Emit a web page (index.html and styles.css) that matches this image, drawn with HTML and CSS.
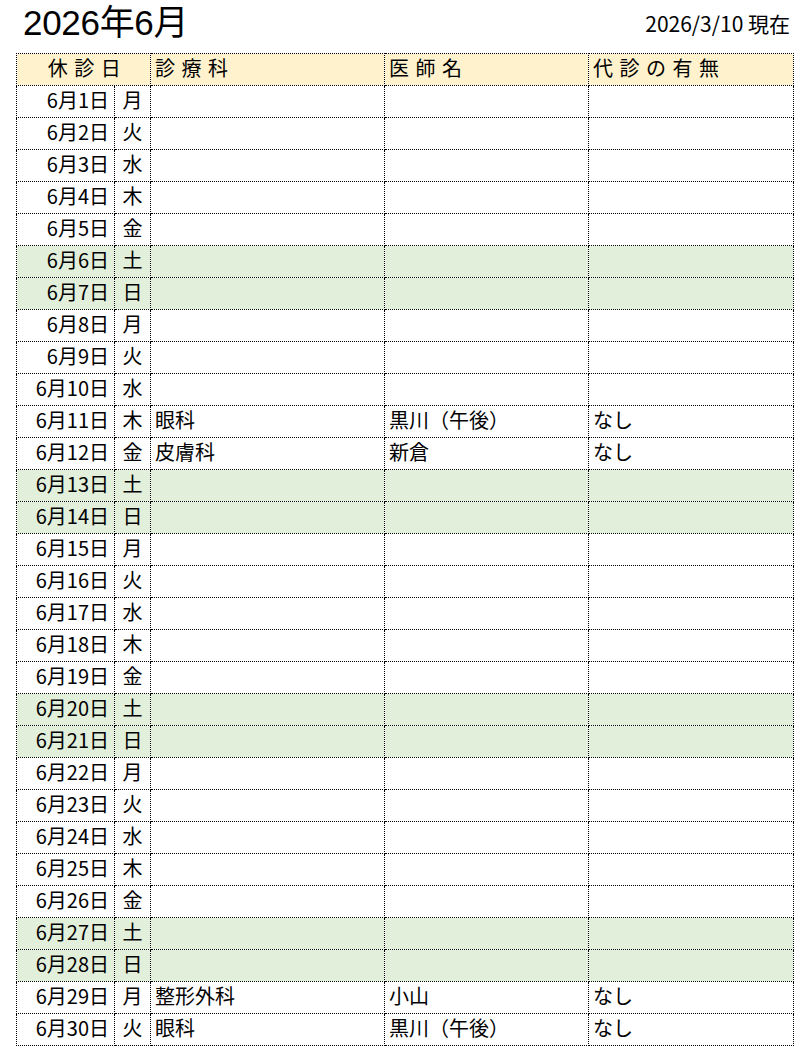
FILE: index.html
```html
<!DOCTYPE html>
<html lang="ja">
<head>
<meta charset="utf-8">
<link rel="stylesheet" href="styles.css">
</head>
<body>
<div class="page">
  <div class="top">
    <h1 class="title">2026年6月</h1>
    <div class="asof">2026/3/10 現在</div>
  </div>
  <table class="sched">
    <colgroup>
      <col class="c-date"><col class="c-wd"><col class="c-dept"><col class="c-doc"><col class="c-sub">
    </colgroup>
    <thead>
      <tr><th colspan="2" class="h-center">休診日</th><th>診療科</th><th>医師名</th><th>代診の有無</th></tr>
    </thead>
    <tbody>
      <tr><td class="d">6月1日</td><td class="w">月</td><td></td><td></td><td></td></tr>
      <tr><td class="d">6月2日</td><td class="w">火</td><td></td><td></td><td></td></tr>
      <tr><td class="d">6月3日</td><td class="w">水</td><td></td><td></td><td></td></tr>
      <tr><td class="d">6月4日</td><td class="w">木</td><td></td><td></td><td></td></tr>
      <tr><td class="d">6月5日</td><td class="w">金</td><td></td><td></td><td></td></tr>
      <tr class="we"><td class="d">6月6日</td><td class="w">土</td><td></td><td></td><td></td></tr>
      <tr class="we"><td class="d">6月7日</td><td class="w">日</td><td></td><td></td><td></td></tr>
      <tr><td class="d">6月8日</td><td class="w">月</td><td></td><td></td><td></td></tr>
      <tr><td class="d">6月9日</td><td class="w">火</td><td></td><td></td><td></td></tr>
      <tr><td class="d">6月10日</td><td class="w">水</td><td></td><td></td><td></td></tr>
      <tr><td class="d">6月11日</td><td class="w">木</td><td>眼科</td><td>黒川（午後）</td><td>なし</td></tr>
      <tr><td class="d">6月12日</td><td class="w">金</td><td>皮膚科</td><td>新倉</td><td>なし</td></tr>
      <tr class="we"><td class="d">6月13日</td><td class="w">土</td><td></td><td></td><td></td></tr>
      <tr class="we"><td class="d">6月14日</td><td class="w">日</td><td></td><td></td><td></td></tr>
      <tr><td class="d">6月15日</td><td class="w">月</td><td></td><td></td><td></td></tr>
      <tr><td class="d">6月16日</td><td class="w">火</td><td></td><td></td><td></td></tr>
      <tr><td class="d">6月17日</td><td class="w">水</td><td></td><td></td><td></td></tr>
      <tr><td class="d">6月18日</td><td class="w">木</td><td></td><td></td><td></td></tr>
      <tr><td class="d">6月19日</td><td class="w">金</td><td></td><td></td><td></td></tr>
      <tr class="we"><td class="d">6月20日</td><td class="w">土</td><td></td><td></td><td></td></tr>
      <tr class="we"><td class="d">6月21日</td><td class="w">日</td><td></td><td></td><td></td></tr>
      <tr><td class="d">6月22日</td><td class="w">月</td><td></td><td></td><td></td></tr>
      <tr><td class="d">6月23日</td><td class="w">火</td><td></td><td></td><td></td></tr>
      <tr><td class="d">6月24日</td><td class="w">水</td><td></td><td></td><td></td></tr>
      <tr><td class="d">6月25日</td><td class="w">木</td><td></td><td></td><td></td></tr>
      <tr><td class="d">6月26日</td><td class="w">金</td><td></td><td></td><td></td></tr>
      <tr class="we"><td class="d">6月27日</td><td class="w">土</td><td></td><td></td><td></td></tr>
      <tr class="we"><td class="d">6月28日</td><td class="w">日</td><td></td><td></td><td></td></tr>
      <tr><td class="d">6月29日</td><td class="w">月</td><td>整形外科</td><td>小山</td><td>なし</td></tr>
      <tr><td class="d">6月30日</td><td class="w">火</td><td>眼科</td><td>黒川（午後）</td><td>なし</td></tr>
    </tbody>
  </table>
</div>
</body>
</html>
```
FILE: styles.css
```css
html, body {
  margin: 0;
  padding: 0;
  background: #ffffff;
}
body {
  font-family: "Noto Sans CJK JP", "Noto Sans", sans-serif;
  color: #000000;
}
.page {
  padding: 0 17px 0 16px;
  width: 777px;
}
.top {
  height: 53px;
  display: flex;
  justify-content: space-between;
  align-items: flex-start;
}
.title {
  margin: 0;
  padding: 3px 0 0 7px;
  font-family: "Liberation Sans", "Noto Sans CJK JP", sans-serif;
  font-size: 35px;
  font-weight: 400;
  line-height: 40px;
  letter-spacing: -0.3px;
}
.asof {
  padding-top: 11px;
  font-size: 21px;
  line-height: 24px;
  margin-right: 3px;
}
.sched {
  border-collapse: collapse;
  table-layout: fixed;
  width: 777px;
  font-size: 20px;
}
.c-date { width: 98px; }
.c-wd { width: 36px; }
.c-dept { width: 234px; }
.c-doc { width: 204px; }
.c-sub { width: 205px; }
.sched th, .sched td {
  border: 1px dotted #000;
  height: 31px;
  padding: 0 4px 4px;
  box-sizing: border-box;
  line-height: 24px;
  white-space: nowrap;
  overflow: hidden;
}
.sched tr { height: 32px; }
.sched th {
  background: #fff2cc;
  font-weight: 400;
  text-align: left;
  letter-spacing: 6.5px;
}
.sched th.h-center {
  text-align: center;
  padding-left: 12px;
}
.sched td.d {
  text-align: right;
  padding-right: 5px;
}
.sched td.w {
  text-align: center;
  padding-left: 0;
  padding-right: 0;
}
.sched tr.we td {
  background: #e2efda;
}
```
